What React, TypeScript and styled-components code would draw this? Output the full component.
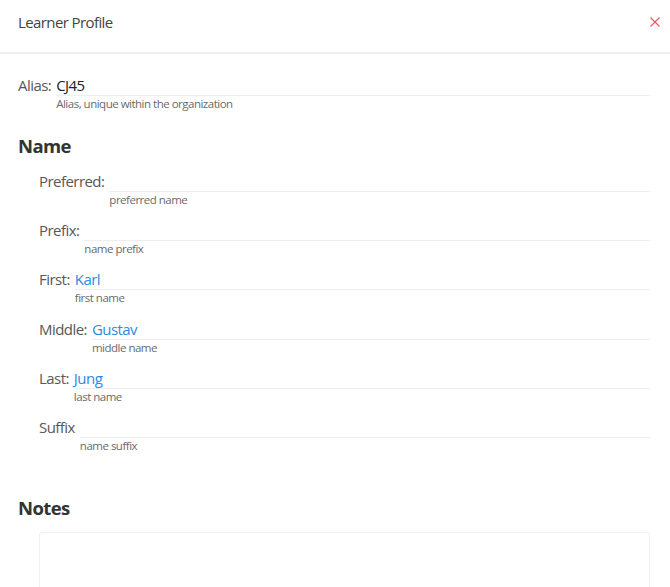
import styled, { createGlobalStyle } from 'styled-components';

const GlobalStyle = createGlobalStyle`
  html, body {
    margin: 0;
    padding: 0;
    background: #ffffff;
    font-family: "Open Sans", "Liberation Sans", sans-serif;
  }
`;

const Page = styled.div`
  width: 670px;
  height: 587px;
  overflow: hidden;
  background: #ffffff;
`;

const Header = styled.header`
  display: flex;
  justify-content: space-between;
  align-items: center;
  box-sizing: border-box;
  height: 54px;
  padding: 0 6px 8px 18px;
  border-bottom: 2px solid #f0f0f0;
`;

const HeaderTitle = styled.h1`
  margin: 0;
  font-size: 15px;
  font-weight: 400;
  letter-spacing: -0.6px;
  color: #444;
`;

const CloseButton = styled.button`
  background: none;
  border: none;
  padding: 4px;
  cursor: pointer;
  display: flex;
  align-items: center;
  justify-content: center;
`;

const Body = styled.main`
  padding: 20px 20px 0 18px;
  display: flex;
  flex-direction: column;
`;

const SectionTitle = styled.h2<{ $gapTop: number }>`
  margin: ${p => p.$gapTop}px 0 10px;
  font-size: 18.5px;
  line-height: 28px;
  font-weight: 700;
  letter-spacing: -0.6px;
  color: #333;
`;

const FieldList = styled.div<{ $indent?: boolean }>`
  display: flex;
  flex-direction: column;
  gap: 11.2px;
  padding-left: ${p => (p.$indent ? '21px' : '0')};
`;

const Field = styled.div`
  display: flex;
  align-items: flex-start;
  gap: 5px;
`;

const Label = styled.span`
  font-size: 15px;
  line-height: 22px;
  letter-spacing: -0.55px;
  color: #585858;
  white-space: nowrap;
`;

const FieldBody = styled.div`
  flex: 1;
  display: flex;
  flex-direction: column;
`;

const Value = styled.div<{ $accent?: boolean }>`
  height: 21px;
  line-height: 22px;
  font-size: 15px;
  letter-spacing: -0.55px;
  color: ${p => (p.$accent ? '#2b8ce3' : '#222')};
  border-bottom: 1px solid #eeeeee;
`;

const Helper = styled.div`
  font-size: 11.5px;
  line-height: 16px;
  letter-spacing: -0.5px;
  color: #6a6a6a;
`;

const NotesBox = styled.div`
  margin-left: 21px;
  height: 80px;
  border: 1px solid #f0f0f0;
  border-radius: 3px;
`;

interface FieldRowProps {
  label: string;
  value?: string;
  helper: string;
  accent?: boolean;
}

function FieldRow({ label, value, helper, accent }: FieldRowProps) {
  return (
    <Field>
      <Label>{label}</Label>
      <FieldBody>
        <Value $accent={accent}>{value}</Value>
        <Helper>{helper}</Helper>
      </FieldBody>
    </Field>
  );
}

const nameFields = [
  { label: 'Preferred:', value: '', helper: 'preferred name' },
  { label: 'Prefix:', value: '', helper: 'name prefix' },
  { label: 'First:', value: 'Karl', helper: 'first name' },
  { label: 'Middle:', value: 'Gustav', helper: 'middle name' },
  { label: 'Last:', value: 'Jung', helper: 'last name' },
  { label: 'Suffix', value: '', helper: 'name suffix' },
];

export default function App() {
  return (
    <Page>
      <GlobalStyle />
      <Header>
        <HeaderTitle>Learner Profile</HeaderTitle>
        <CloseButton aria-label="Close">
          <svg width="10" height="10" viewBox="0 0 10 10">
            <path d="M0.5 0.5 L9.5 9.5 M9.5 0.5 L0.5 9.5" stroke="#e8555a" strokeWidth="1.1" />
          </svg>
        </CloseButton>
      </Header>
      <Body>
        <FieldList>
          <FieldRow label="Alias:" value="CJ45" helper="Alias, unique within the organization" />
        </FieldList>
        <SectionTitle $gapTop={20}>Name</SectionTitle>
        <FieldList $indent>
          {nameFields.map(f => (
            <FieldRow key={f.label} label={f.label} value={f.value} helper={f.helper} accent />
          ))}
        </FieldList>
        <SectionTitle $gapTop={40}>Notes</SectionTitle>
        <NotesBox />
      </Body>
    </Page>
  );
}
